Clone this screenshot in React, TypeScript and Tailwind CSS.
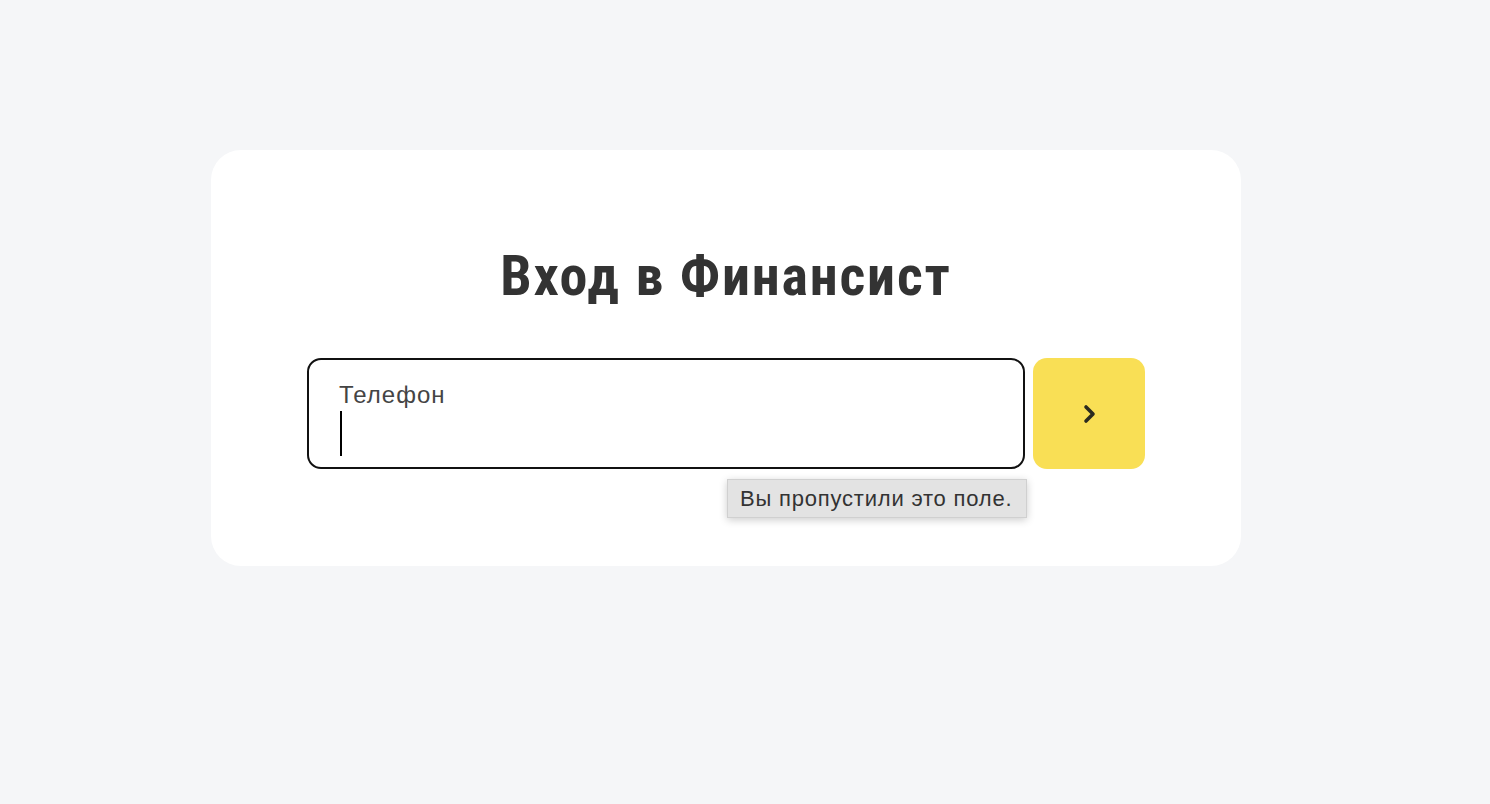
import React from "react";

export default function App() {
  return (
    <div className="w-[1490px] h-[804px] bg-[#f5f6f8] pt-[150px] pl-[211px]" style={{ fontFamily: "'Liberation Sans', Arial, sans-serif" }}>
      <div className="w-[1030px] h-[416px] bg-white rounded-[30px] flex flex-col items-center pt-[94px]">
        <h1 className="text-[56px] leading-[64px] font-bold text-[#333333] tracking-[1.8px]" style={{ fontFamily: "'Roboto Condensed', 'Liberation Sans', sans-serif" }}>
          Вход в Финансист
        </h1>
        <div className="flex gap-2 mt-[50px] relative">
          <div className="w-[718px] h-[111px] border-2 border-[#111] rounded-[14px] pl-[30px] pt-[21px]">
            <div className="text-[24px] leading-[28px] text-[#444] tracking-[1px]" style={{ fontFamily: "'Liberation Sans', Arial, sans-serif" }}>Телефон</div>
            <div className="w-[2px] h-[45px] bg-black mt-[2px] ml-px" />
          </div>
          <button className="w-[112px] h-[111px] bg-[#f9df55] rounded-[14px] flex items-center justify-center">
            <svg width="24" height="24" viewBox="0 0 24 24" fill="none" stroke="#2b2b1f" strokeWidth="3.6" strokeLinecap="round" strokeLinejoin="round">
              <path d="M9 5l7 7-7 7" />
            </svg>
          </button>
          <div className="absolute left-[420px] top-[121px] h-[39px] w-[300px] bg-[#e3e3e3] border border-[#d0d0d0] shadow-[0_2px_8px_rgba(0,0,0,0.2)] flex items-center pl-[12px] text-[22px] text-[#333] tracking-[0.8px]">
            Вы пропустили это поле.
          </div>
        </div>
      </div>
    </div>
  );
}
